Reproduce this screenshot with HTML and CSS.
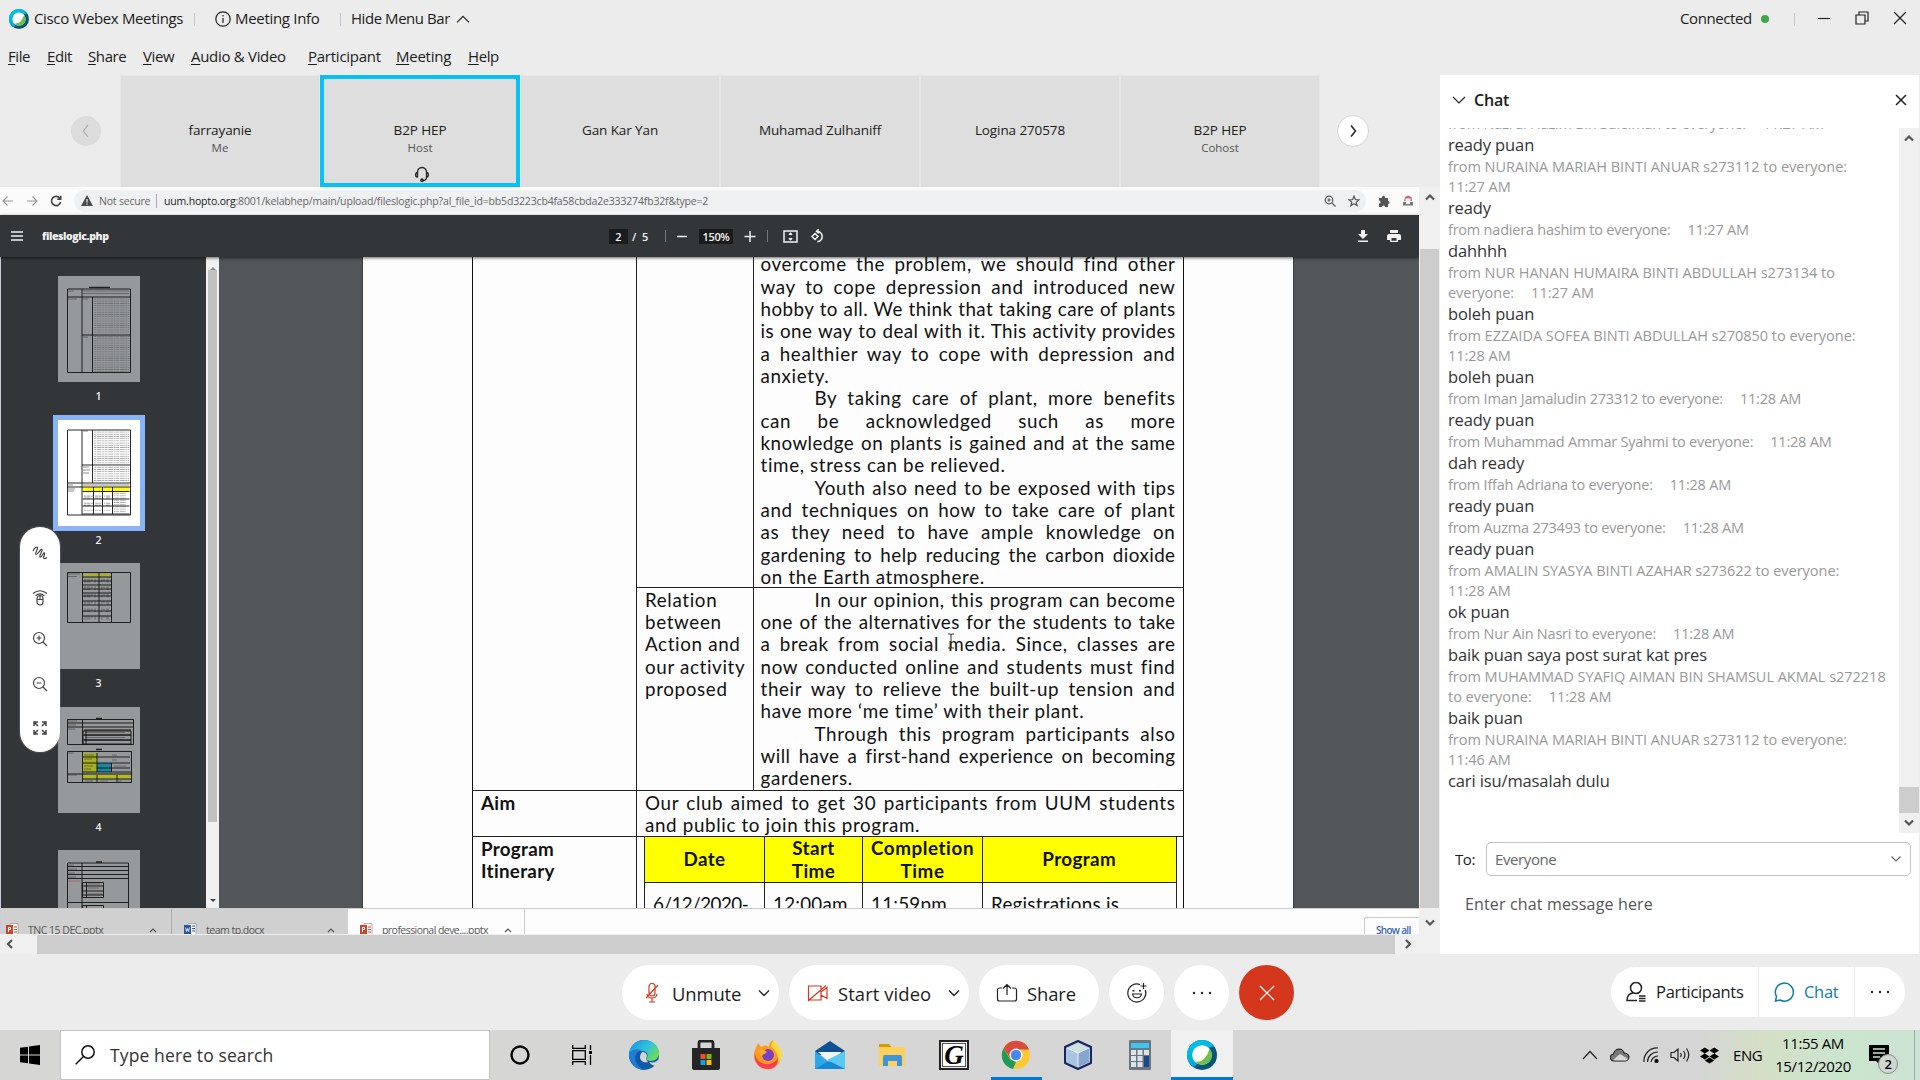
FILE: index.html
```html
<!DOCTYPE html>
<html lang="en">
<head>
<meta charset="utf-8">
<title>Cisco Webex Meetings</title>
<link rel="stylesheet" href="styles.css">
</head>
<body>
<div class="app">
  <header class="titlebar">
    <svg class="logo" viewBox="0 0 32 32"><use href="#webex"/></svg>
    <span class="t-app">Cisco Webex Meetings</span>
    <i class="sep"></i>
    <svg class="ic info" viewBox="0 0 16 16"><circle cx="8" cy="8" r="7.2"/><path d="M8 7v5M8 4v1.4"/></svg>
    <span class="t-info">Meeting Info</span>
    <i class="sep"></i>
    <span class="t-hide">Hide Menu Bar</span>
    <svg class="ic up" viewBox="0 0 14 8"><path d="M1 7.300l6-6 6 6"/></svg>
    <span class="t-conn">Connected</span><i class="dot"></i><i class="sep sep-win"></i>
    <svg class="ic win" viewBox="0 0 14 14"><path d="M1 7.500h12"/></svg>
    <svg class="ic win" viewBox="0 0 14 14"><path d="M1 4h9v9H1zM4 4V1h9v9h-3"/></svg>
    <svg class="ic win" viewBox="0 0 14 14"><path d="M1 1l12 12M13 1L1 13"/></svg>
  </header>
  <nav class="menu">
    <span class="m1"><u>F</u>ile</span><span class="m2"><u>E</u>dit</span><span class="m3"><u>S</u>hare</span><span class="m4"><u>V</u>iew</span><span class="m5"><u>A</u>udio &amp; Video</span><span class="m6"><u>P</u>articipant</span><span class="m7"><u>M</u>eeting</span><span class="m8"><u>H</u>elp</span>
  </nav>

  <div class="middle">
    <main class="stage">
      <div class="strip">
        <div class="side"><span class="round off"><svg class="ic" viewBox="0 0 8 14"><path d="M6 1L1.500 7 6 13"/></svg></span></div>
        <div class="tile"><b>farrayanie</b><small>Me</small></div>
        <div class="tile active"><b>B2P HEP</b><small>Host</small>
          <svg class="ic headset" viewBox="0 0 16 16"><path d="M3.500 11.500V6a4.500 4.500 0 0 1 9 0v5.500M3.500 6.500C1 6.500 1 11 3.500 11M12.500 6.500c2.500 0 2.500 4.500 0 4.500M12.500 11.500c0 2-1.500 3-4 3"/><circle cx="8" cy="14.200" r="1.200"/></svg></div>
        <div class="tile"><b>Gan Kar Yan</b><small></small></div>
        <div class="tile"><b>Muhamad Zulhaniff</b><small></small></div>
        <div class="tile"><b>Logina 270578</b><small></small></div>
        <div class="tile"><b>B2P HEP</b><small>Cohost</small></div>
        <div class="side"><span class="round"><svg class="ic" viewBox="0 0 8 14"><path d="M2 1.500L6.500 7 2 12.500"/></svg></span></div>
      </div>

      <div class="share">
        <div class="shared">
          <div class="address">
            <svg class="ac nav" viewBox="0 0 12 12"><path d="M11 6H1.500M5.500 1.500L1 6l4.500 4.500"/></svg>
            <svg class="ac nav" viewBox="0 0 12 12"><path d="M1 6h9.500M6.500 1.500L11 6l-4.500 4.500"/></svg>
            <svg class="ac reload" viewBox="0 0 12 12"><path d="M10 3.500A4.600 4.600 0 1 0 10.600 7M10.700.8V4.300H7.200"/></svg>
            <div class="pill">
              <svg class="warn" viewBox="0 0 12 11"><path d="M6 0l6 11H0z"/><path class="w" d="M6 4v3.500M6 8.500v1.300"/></svg>
              <span class="ns">Not secure</span><i></i>
              <span class="url"><em>uum.hopto.org</em>:8001/kelabhep/main/upload/fileslogic.php?al_file_id=bb5d3223cb4fa58cbda2e333274fb32f&amp;type=2</span>
              <svg class="ac zoomi" viewBox="0 0 12 12"><circle cx="5" cy="5" r="3.800"/><path d="M8 8l3.500 3.500M3.200 5h3.600M5 3.200v3.600"/></svg>
              <svg class="ac star" viewBox="0 0 12 12"><path d="M6 1.200l1.400 3.300 3.500.3-2.700 2.300.9 3.500L6 8.800l-3.100 1.800.9-3.500L1.100 4.800l3.500-.3z"/></svg>
            </div>
            <svg class="puzzle" viewBox="0 0 12 12"><path d="M1 3h3a1.600 1.600 0 1 1 3 0h3v3a1.500 1.500 0 1 1 0 3v3H7.200a1.600 1.600 0 0 0-3.200 0H1V8.500a1.500 1.500 0 0 0 0-3z"/></svg>
            <svg class="avatar" viewBox="0 0 12 12"><path fill="#c46a78" d="M3 2l3-1.500L9.500 2l.5 4H8.500V3.500h-5V6H2z"/><path fill="#777" d="M1 7h3v2h4V7h3v3.500H1z"/></svg>
          </div>

          <div class="pdfbar">
            <svg class="pi burger" viewBox="0 0 12 10"><path d="M0 1h12M0 5h12M0 9h12"/></svg>
            <b class="file">fileslogic.php</b>
            <span class="box pg">2</span><span class="of">/&nbsp; 5</span><i></i>
            <svg class="pi minus" viewBox="0 0 12 12"><path d="M1 6.500h10"/></svg>
            <span class="box pc">150%</span>
            <svg class="pi plus" viewBox="0 0 12 12"><path d="M.5 6.500h11M6 1v11"/></svg><i></i>
            <svg class="pi fit" viewBox="0 0 15 13"><path d="M1 1h13v11H1zM7.500 3.500v1.500M7.500 8v1.500M6 4.700l1.500-1.500L9 4.700M6 8.300l1.500 1.500L9 8.300"/></svg>
            <svg class="pi rot" viewBox="0 0 14 14"><path d="M5 4.500l3 3-3 3-3-3zM6.500 2.200a5.300 5.300 0 0 1 .8 10.600M8.800.2L6.500 2.300l2.300 2.200"/></svg>
            <svg class="ps down" viewBox="0 0 12 14"><path d="M4 1h4v4h3L6 10 1 5h3zM1 11.500h10V13H1z"/></svg>
            <svg class="ps print" viewBox="0 0 14 14"><path d="M3 1h8v3H3zM2 5h10a2 2 0 0 1 2 2v4h-3v2H3v-2H0V7a2 2 0 0 1 2-2zm2.500 4v2.800h5V9z"/></svg>
          </div>

          <div class="viewer">
            <aside class="thumbs">
              <figure><svg viewBox="0 0 82 106"><rect class="g" width="82" height="106"/><path class="k2" d="M31 11.500h21"/>
                <g class="tx"><path d="M25 15h46M25 17.500h46M10 15h6M10 23h9M25 23h5M25 61h5"/><rect x="36" y="22" width="35" height="35" fill="url(#lines)"/><rect x="36" y="60" width="35" height="36" fill="url(#lines)"/></g>
                <path class="k" d="M9.500 13h63v83.500h-63zM9.500 21h63M24 13v83.500M34.500 21v75.500M24 59h48"/></svg><figcaption>1</figcaption></figure>
              <figure class="cur"><svg viewBox="0 0 82 106"><rect fill="#fff" width="82" height="106"/>
                <g class="tx"><path d="M25 11h5M25 47h6M25 50h7M25 53h6M10 65h5M25 65h46M10 69h7M10 71h6"/><rect x="36" y="11" width="35" height="33" fill="url(#lines)"/><rect x="36" y="46" width="35" height="15" fill="url(#lines)"/><rect x="26" y="72" width="9" height="19" fill="url(#sparse)"/><rect x="37" y="72" width="6" height="19" fill="url(#sparse)"/><rect x="46" y="72" width="6" height="19" fill="url(#sparse)"/><rect x="56" y="71" width="12" height="22" fill="url(#lines)"/></g>
                <rect x="24.500" y="67" width="47" height="4.500" fill="#ff0"/><path class="k" d="M9.500 10h63v85h-63zM24 10v85M34.500 10v53M24 45h48M9.500 63h63M9.500 67h63M24.500 71.500h47M24.500 79h47M24.500 86h47M24.500 94h47M35.500 67v27M44.500 67v27M54.500 67v27"/></svg><figcaption>2</figcaption></figure>
              <figure><svg viewBox="0 0 82 106"><rect class="g" width="82" height="106"/>
                <g class="tx"><path d="M10 11h12M10 13.500h9"/><rect x="26" y="15" width="12" height="43" fill="url(#sparse)"/><rect x="43" y="15" width="8" height="43" fill="url(#sparse)"/></g>
                <rect x="24.500" y="11" width="29" height="2.500" fill="#aeb022"/><path class="k" d="M9.500 9.500h63v50h-63zM24.500 9.500v50M41 10v49M53.500 10v49M24.500 14h29M24.500 18h29M24.500 22h29M24.500 26h29M24.500 30h29M24.500 33h29M24.500 38h29M24.500 42h29M24.500 48h29M24.500 53h29"/></svg><figcaption>3</figcaption></figure>
              <figure><svg viewBox="0 0 82 106"><rect class="g" width="82" height="106"/><path class="k2" d="M38 11.500h6M38 42.500h6"/>
                <path fill="#555" d="M26 22h47v2H26zM26 27h47v2H26zM26 32h47v2H26z"/><rect x="25" y="46" width="14" height="19" fill="#a6b020"/><rect x="39" y="56" width="14.500" height="9" fill="#1b86a0"/><rect x="25" y="68" width="48" height="3.500" fill="#b3bb14"/>
                <g class="tx"><path d="M26 48h10M26 52h8M26 59h9M26 62h7M54 48h5M54 53h5M56 59h12M10 14h9M10 18h8M10 22h7M27 25.500h40M27 30.500h40M27 74h8M42 74h8M60 74h4M10 46h6M10 68h9"/></g>
                <path class="k" d="M9.500 12.500h66v25h-66zM9.500 16h66M9.500 20h66M24.500 12.500v25M25 24h48v13H25zM28 24v13M25 28h48M25 33h48M9.500 44.500h64V75.500h-64zM24.500 44.500v31M25 50h47M25 56h47M39 46v19M53.500 56v9M39 61h33M25 65h48M9.500 67h64M25 72h48M39 68v7.500M59 68v7.500"/></svg><figcaption>4</figcaption></figure>
              <figure><svg viewBox="0 0 82 106"><rect class="g" width="82" height="106"/><path class="k2" d="M38 12h6"/><g class="tx"><path d="M10 15h6M10 19h9M10 23h7M10 27h8M30 34h12M30 38h11M30 44h14"/></g><path stroke="#b4474d" stroke-width=".6" d="M10 31h12"/>
                <path class="k" d="M9.500 13h61v90h-61zM24 13v90M9.500 16.500h61M9.500 20.500h61M9.500 24.500h61M9.500 28.500h61M24.500 32.500h21v15h-21zM28.500 32.500v15M24.500 36h21M24.500 41h21M24.500 45h21M9.500 52.500h61M24.500 55.500h21v10h-21zM28.500 55.500v10"/></svg></figure>
            </aside>
            <div class="tsb"><i class="ua"></i><i class="th"></i><i class="da"></i></div>
            <div class="canvas">
              <div class="page">
                <div class="doc">
                  <div class="c1"></div>
                  <div class="c2"></div>
                  <div class="c3 r1">
                    <p>overcome the problem, we should find other</p><p>way to cope depression and introduced new</p><p class="tight">hobby to all. We think that taking care of plants</p><p class="tight">is one way to deal with it. This activity provides</p><p>a healthier way to cope with depression and</p><p class="n">anxiety.</p>
                    <p class="in">By taking care of plant, more benefits</p><p>can be acknowledged such as more</p><p class="tight">knowledge on plants is gained and at the same</p><p class="n">time, stress can be relieved.</p>
                    <p class="in">Youth also need to be exposed with tips</p><p>and techniques on how to take care of plant</p><p>as they need to have ample knowledge on</p><p class="tight">gardening to help reducing the carbon dioxide</p><p class="n">on the Earth atmosphere.</p>
                  </div>
                  <div class="c1"></div>
                  <div class="c2 line"><p class="n">Relation</p><p class="n">between</p><p class="n">Action and</p><p class="n">our activity</p><p class="n">proposed</p></div>
                  <div class="c3 r2 line">
                    <p class="in">In our opinion, this program can become</p><p class="tight">one of the alternatives for the students to take</p><p>a break from social media. Since, classes are</p><p>now conducted online and students must find</p><p>their way to relieve the built-up tension and</p><p class="n">have more ‘me time’ with their plant.</p>
                    <p class="in">Through this program participants also</p><p class="tight">will have a first-hand experience on becoming</p><p class="n">gardeners.</p>
                    <svg class="ibeam" viewBox="0 0 8 16"><path d="M1 1h2.500L4 2l.5-1H7M4 2v12M1 15h2.500l.5-1 .5 1H7"/></svg>
                  </div>
                  <div class="c1 line bold"><p class="n">Aim</p></div>
                  <div class="wide line r3"><p>Our club aimed to get 30 participants from UUM students</p><p class="n">and public to join this program.</p></div>
                  <div class="c1 line bold"><p class="n">Program</p><p class="n">Itinerary</p></div>
                  <div class="wide line r4">
                    <div class="sched">
                      <b>Date</b><b>Start<br>Time</b><b class="wd">Completion<br>Time</b><b>Program</b>
                      <span>6/12/2020-</span><span>12:00am</span><span>11:59pm</span><span>Registrations is</span>
                    </div>
                  </div>
                </div>
              </div>
            </div>
          </div>

          <div class="downloads">
            <div class="dl"><svg viewBox="0 0 13 13"><use href="#ppt"/></svg><span>TNC 15 DEC.pptx</span><svg class="ch" viewBox="0 0 8 5"><path d="M1 4l3-3 3 3"/></svg></div>
            <div class="dl"><svg viewBox="0 0 13 13"><use href="#doc"/></svg><span>team tp.docx</span><svg class="ch" viewBox="0 0 8 5"><path d="M1 4l3-3 3 3"/></svg></div>
            <div class="dl on"><svg viewBox="0 0 13 13"><use href="#ppt"/></svg><span>professional deve....pptx</span><svg class="ch" viewBox="0 0 8 5"><path d="M1 4l3-3 3 3"/></svg></div>
            <span class="showall">Show all</span>
          </div>
        </div>
        <div class="vsb"><svg class="sa" viewBox="0 0 10 8"><path d="M1 6.500l4-4 4 4"/></svg><i></i><svg class="sa" viewBox="0 0 10 8"><path d="M1 1.500l4 4 4-4"/></svg></div>
        <div class="hsb"><svg class="sa h" viewBox="0 0 8 10"><path d="M6 1L2 5l4 4"/></svg><i></i><svg class="sa h" viewBox="0 0 8 10"><path d="M2 1l4 4-4 4"/></svg></div>
        <div class="tools">
          <svg class="ic" viewBox="0 0 16 14"><path d="M1 5c1.500-3 4-5 4.500-3.500S2.500 8 4 8.500 9 2 10 3.500 6.500 10 8 11s3.500-5 4.500-4-2 5-.5 5.500 2-.5 3-1"/></svg>
          <svg class="ic" viewBox="0 0 16 16"><path d="M1 3.500Q8-2 15 3.500M3.500 5.800Q8 2 12.500 5.800M5 8.500a3 3 0 0 1 6 0V12a3 3 0 0 1-6 0zM5 9.500h6M8 6v3.500"/></svg>
          <svg class="ic zin" viewBox="0 0 16 16"><circle cx="7" cy="7" r="5.500"/><path d="M11 11l4 4M4.500 7h5M7 4.500v5"/></svg>
          <svg class="ic" viewBox="0 0 16 16"><circle cx="7" cy="7" r="5.500"/><path d="M11 11l4 4M4.500 7h5"/></svg>
          <svg class="ic fs" viewBox="0 0 16 16"><path d="M2 6V2h4M2 2l4 4M10 2h4v4M14 2l-4 4M2 10v4h4M2 14l4-4M14 10v4h-4M14 14l-4-4"/></svg>
        </div>
      </div>
    </main>

    <section class="chat">
      <div class="chead"><svg class="ic cv" viewBox="0 0 14 8"><path d="M1 1l6 6 6-6"/></svg><b>Chat</b><svg class="ic cx" viewBox="0 0 12 12"><path d="M1 1l10 10M11 1L1 11"/></svg></div>
      <div class="cbody">
        <div class="msgs">
          <div class="f">from Nazrul Hazim Bin Suleiman to everyone:<s></s>11:27 AM</div><div class="t">ready puan</div>
          <div class="f caps">from NURAINA MARIAH BINTI ANUAR s273112 to everyone:<br>11:27 AM</div><div class="t">ready</div>
          <div class="f">from nadiera hashim to everyone:<s></s>11:27 AM</div><div class="t">dahhhh</div>
          <div class="f caps">from NUR HANAN HUMAIRA BINTI ABDULLAH s273134 to<br>everyone:<s></s>11:27 AM</div><div class="t">boleh puan</div>
          <div class="f caps">from EZZAIDA SOFEA BINTI ABDULLAH s270850 to everyone:<br>11:28 AM</div><div class="t">boleh puan</div>
          <div class="f">from Iman Jamaludin 273312 to everyone:<s></s>11:28 AM</div><div class="t">ready puan</div>
          <div class="f">from Muhammad Ammar Syahmi to everyone:<s></s>11:28 AM</div><div class="t">dah ready</div>
          <div class="f">from Iffah Adriana to everyone:<s></s>11:28 AM</div><div class="t">ready puan</div>
          <div class="f">from Auzma 273493 to everyone:<s></s>11:28 AM</div><div class="t">ready puan</div>
          <div class="f caps">from AMALIN SYASYA BINTI AZAHAR s273622 to everyone:<br>11:28 AM</div><div class="t">ok puan</div>
          <div class="f">from Nur Ain Nasri to everyone:<s></s>11:28 AM</div><div class="t">baik puan saya post surat kat pres</div>
          <div class="f caps">from MUHAMMAD SYAFIQ AIMAN BIN SHAMSUL AKMAL s272218<br>to everyone:<s></s>11:28 AM</div><div class="t">baik puan</div>
          <div class="f caps">from NURAINA MARIAH BINTI ANUAR s273112 to everyone:<br>11:46 AM</div><div class="t">cari isu/masalah dulu</div>
        </div>
        <div class="csb"><svg class="sa" viewBox="0 0 10 8"><path d="M1 6.500l4-4 4 4"/></svg><i></i><svg class="sa" viewBox="0 0 10 8"><path d="M1 1.500l4 4 4-4"/></svg></div>
      </div>
      <div class="to"><span>To:</span><div class="sel">Everyone<svg class="ic" viewBox="0 0 12 8"><path d="M1.500 1.500L6 6l4.500-4.500"/></svg></div></div>
      <div class="entry">Enter chat message here</div>
    </section>
  </div>

  <footer class="controls">
    <div class="btn b1"><svg class="ic red" viewBox="0 0 18 20"><path d="M6 3.500a3 3 0 0 1 6 0V10a3 3 0 0 1-6 0zM4 11c.5 3 2.500 4 5 4s4.500-1 5-4M9 15v4M6 19h6M15 2L3 15"/></svg><span>Unmute</span><svg class="ic cd" viewBox="0 0 12 8"><path d="M1 1.500L6 6.500l5-5"/></svg></div>
    <div class="btn b2"><svg class="ic red" viewBox="0 0 22 20"><path d="M1.500 3h12.500v14H1.500zM14 9l6-4.500v11L14 12M19 2.500L1 18"/></svg><span>Start video</span><svg class="ic cd" viewBox="0 0 12 8"><path d="M1 1.500L6 6.500l5-5"/></svg></div>
    <div class="btn b3"><svg class="ic" viewBox="0 0 22 20"><path d="M6 5H3.500A2 2 0 0 0 1.500 7v9a2 2 0 0 0 2 2h15a2 2 0 0 0 2-2V7a2 2 0 0 0-2-2H16M11 12V1.500M7 5.500l4-4 4 4"/></svg><span>Share</span></div>
    <div class="btn c"><svg class="ic" viewBox="0 0 22 22"><path d="M14 2.600A9 9 0 1 0 19.300 8M17.500 1v6M14.500 4h6M6.500 12c1 5 8 5 9 0z"/><path d="M7.500 8v1.500M14 8v1.500" stroke-width="2"/></svg></div>
    <div class="btn c"><svg class="dots" viewBox="0 0 20 4"><circle cx="2" cy="2" r="1.200"/><circle cx="10" cy="2" r="1.200"/><circle cx="18" cy="2" r="1.200"/></svg></div>
    <div class="btn c end"><svg class="ic" viewBox="0 0 16 16"><path d="M1 1l14 14M15 1L1 15"/></svg></div>
    <div class="panel">
      <div class="p1"><svg class="ic" viewBox="0 0 20 20"><path d="M7 11C3 11.500 1 14 1 18.500h10M12.500 11l-1 1"/><ellipse cx="10" cy="6" rx="5.500" ry="5.500"/><path d="M13 14h6.500M13 16.500h6.500M13 19h6.500"/></svg><span>Participants</span></div>
      <div class="p2"><svg class="ic" viewBox="0 0 20 20"><path d="M1.500 19l1-4.500A9 9 0 1 1 6 18z"/></svg><span>Chat</span></div>
      <div class="p3"><svg class="dots" viewBox="0 0 20 4"><circle cx="2" cy="2" r="1.200"/><circle cx="10" cy="2" r="1.200"/><circle cx="18" cy="2" r="1.200"/></svg></div>
    </div>
  </footer>

  <div class="taskbar">
    <div class="start"><svg viewBox="0 0 20 20"><path d="M0 2.800l8-1.100v7.800H0zM9 1.500L20 0v9.500H9zM0 10.500h8v7.800l-8-1.100zM9 10.500h11V20L9 18.500z"/></svg></div>
    <div class="search"><svg class="ic" viewBox="0 0 20 20"><circle cx="13" cy="7" r="6.200"/><path d="M8.500 11.500L.7 19.300"/></svg><span>Type here to search</span></div>
    <div class="slot s1"><svg viewBox="0 0 20 20"><circle cx="10" cy="10" r="8.500" fill="none" stroke="#000" stroke-width="2.400"/></svg></div>
    <div class="slot s2"><svg viewBox="0 0 20 20" fill="none" stroke="#000" stroke-width="1.300"><path d="M.7 0v3.300h12.600V0M.7 5.700h12.600v8.600H.7zM.7 20v-3.300h12.600V20M18.500 0v5M18.500 10v10"/><path d="M17 6h3v3h-3z" fill="#000" stroke="none"/></svg></div>
    <div class="slot"><svg class="big" viewBox="0 0 30 30"><defs><linearGradient id="e1" x2="1" y2=".6"><stop stop-color="#1a8fd8"/><stop offset=".6" stop-color="#2fc2df"/><stop offset="1" stop-color="#6ddc5a"/></linearGradient></defs><circle cx="15" cy="15" r="15" fill="#0f59a6"/><path fill="url(#e1)" d="M0 14C1 5 8 0 15 0c9 0 15 6 15 13 0 5-4 8-8 8-3 0-5-1-4-3 2-4-1-7-5-7C7 9 2 11 0 14z"/><path fill="#1b7fd3" d="M0 14c2-4 7-6 12-4-5 2-7 7-5 12 2 4 5 7 9 8C7 30 0 23 0 14z"/><path fill="#d5d5d5" d="M13 12c3 0 5 2 5 4-1 2-1 4 1 6-4 1-8-1-8-5 0-2 1-4 2-5zM20 22c4 1 7 0 9-2l3 0v6l-4 0c-2 0-6-1-8-4z"/></svg></div>
    <div class="slot"><svg class="big" viewBox="0 0 30 30"><path d="M8 9V3q0-2 2-2h10q2 0 2 2v6" fill="none" stroke="#222" stroke-width="2.800"/><path fill="#252525" d="M1 8h28v20q0 2-2 2H3q-2 0-2-2z"/><path fill="#f25022" d="M9.500 14h5v5h-5z"/><path fill="#7fba00" d="M15.500 14h5v5h-5z"/><path fill="#00a4ef" d="M9.500 20h5v5h-5z"/><path fill="#ffb900" d="M15.500 20h5v5h-5z"/></svg></div>
    <div class="slot"><svg class="big" viewBox="0 0 30 30"><path fill="#ff9a1f" d="M2 10l3-7 3 4c3-2 6-2 8 0 0-4 2-6 4-7 1 4 8 7 8 16a13.500 13.500 0 0 1-27 0c0-2 0-4 1-6z"/><path fill="#ffd93b" d="M18 7c0-4 2-6 3-7 1 4 8 7 8 15-1 5-3 7-4 8 1-7-2-13-7-16z"/><path fill="#fa3a5b" d="M2 12c0 5 3 11 10 12s12-3 13-7c1 8-5 12-10 12C7 29 0 22 2 12z"/><circle cx="15" cy="15" r="6" fill="#7b3fc8"/><path fill="#ffae2a" d="M6 10c3-1 6 0 8 2-2 2-4 2-5 4-2-2-3-3-3-6z"/></svg></div>
    <div class="slot"><svg class="big" viewBox="0 0 30 30"><path fill="#0f4f94" d="M0 11L15 1l15 10v4H0z"/><path fill="#f4f4f4" d="M3 12h24L15 22z"/><path fill="#2aa8e8" d="M0 11l15 12L30 11v18H0z"/><path fill="#5cc9f5" d="M30 11v18L12 20z"/><path fill="#1787d6" d="M0 29l14-8 16 8z"/></svg></div>
    <div class="slot"><svg class="big" viewBox="0 0 30 30"><path fill="#d89a00" d="M2 4h10l3 4H2z"/><path fill="#fdd15a" d="M2 7h25q1 0 1 1v18H2z"/><path fill="#3b96dd" d="M6 26V17q0-2 2-2h15q2 0 2 2v9h-5v-5h-9v5z"/></svg></div>
    <div class="slot"><span class="gapp">G</span></div>
    <div class="slot run"><svg class="big" viewBox="0 0 30 30"><circle cx="15" cy="15" r="14" fill="#fcc934"/><path fill="#d94a3f" d="M2.500 8.500A14 14 0 0 1 28 9.500H15L9 18z"/><path fill="#1e9b57" d="M2.500 8.500L9 19l6 3-3 7A14 14 0 0 1 2.500 8.500z"/><circle cx="15" cy="15" r="6.500" fill="#fff"/><circle cx="15" cy="15" r="5.200" fill="#4688f1"/></svg></div>
    <div class="slot"><svg class="big" viewBox="0 0 30 30"><path fill="#a9c4e0" stroke="#1c2360" stroke-width="2" stroke-linejoin="round" d="M15 1l13 6v16l-13 6-13-6V7z"/><path fill="#cfe3dc" d="M15 3l10 5-10 5L5 8z"/><path fill="#86a6d0" d="M15 13l11-5v14l-11 5z"/><path d="M4 8l11 5 11-5M15 13v14" stroke="#e8f2fb" fill="none"/></svg></div>
    <div class="slot"><svg class="big" viewBox="0 0 30 30"><rect x="4" width="22" height="30" rx="1" fill="#6b7780"/><path fill="#3dc5f0" d="M6 3h18v5H6z"/><path fill="#dde3e8" d="M6 10h5v5H6zM12.500 10h5v5h-5zM19 10h5v5h-5zM6 16h5v5H6zM12.500 16h5v5h-5zM6 22h5v5H6zM12.500 22h5v5h-5z"/><path fill="#174a86" d="M19 16h5v11h-5z"/></svg></div>
    <div class="slot run cur"><svg class="big" viewBox="0 0 32 32"><use href="#webex"/></svg></div>
    <div class="tray">
      <svg class="ic k1" viewBox="0 0 16 10"><path d="M1 9l7-7.500L15 9"/></svg>
      <svg class="k2i" viewBox="0 0 20 14"><path fill="#777" stroke="#111" d="M4 13a3.500 3.500 0 0 1-.5-7C4 3 6 1 9 1s4.500 1.500 5 4c3 0 5 1.500 5 4s-2 4-4 4z"/><path fill="#d9d9d9" d="M3 12l7-6 8 5-2 1.500H5z"/></svg>
      <svg class="ic k3" viewBox="0 0 16 16"><path d="M1 15A13 13 0 0 1 15 1M4.500 15A10 10 0 0 1 15 5M8 15a7 7 0 0 1 7-6"/><circle cx="13.500" cy="14" r="1.600" fill="#000"/></svg>
      <svg class="ic k4" viewBox="0 0 20 16"><path d="M1 5.500h3L8 2v12l-4-3.500H1zM10.500 6q1.500 2 0 4M13.500 4q3 4 0 8M16.500 1.500q4.500 6.500 0 13"/></svg>
      <svg class="k5" viewBox="0 0 20 17"><path d="M5 0l5 3.200L5 6.400 0 3.200zM15 0l5 3.200-5 3.200-5-3.200zM5 6.400l5 3.200-5 3.200L0 9.600zM15 6.400l5 3.200-5 3.200-5-3.200zM5 13.800l5-3.200 5 3.200L10 17z"/></svg>
      <span class="eng">ENG</span>
      <span class="clock">11:55 AM<br>15/12/2020</span>
      <span class="note"><svg viewBox="0 0 20 20"><path d="M0 0h20v16h-9v4l-4-4H0z"/><path d="M4 4h12M4 8h12M4 12h7" stroke="#cfe3cc" stroke-width="1.300"/></svg><i>2</i></span>
      <i class="peek"></i>
    </div>
  </div>
</div>

<svg class="defs" width="0" height="0">
  <defs>
    <linearGradient id="wg" x2=".4" y2="1"><stop stop-color="#00c8f0"/><stop offset="1" stop-color="#04a5d6"/></linearGradient>
    <pattern id="lines" width="35" height="2.200" patternUnits="userSpaceOnUse"><path d="M0 1h35" stroke="#444" stroke-width=".6" stroke-dasharray="3 .6 5 .5 2 .5"/></pattern>
    <pattern id="sparse" width="12" height="7.400" patternUnits="userSpaceOnUse"><path d="M0 2h11M0 4h9" stroke="#333" stroke-width=".7" stroke-dasharray="4 .5"/></pattern>
    <symbol id="webex" viewBox="0 0 32 32"><circle cx="16" cy="16" r="16" fill="#06567c"/><path fill="url(#wg)" d="M16 0C7 0 0 7 0 16c0 5 2 9 5 12 2 1 5 0 5-2 2-4 5-9 10-15 3-3 6-4 9-4-3-4-8-7-13-7z"/><circle cx="16" cy="16" r="10.500" fill="#fff"/><path fill="#6fc04a" d="M24 9c4 5 3 12-1 15-5 4-11 3-14-1 8 1 13-6 15-14z"/></symbol>
    <symbol id="ppt" viewBox="0 0 13 13"><path fill="#fff" stroke="#a99" stroke-width=".8" d="M4 .5h8v12H4z"/><path fill="#c8442a" d="M0 2h7v9H0z"/><path d="M2.500 9V4.500h2v2h-2" stroke="#fff" fill="none"/><path stroke="#c8442a" d="M8 4h3M8 6.500h3M8 9h3"/></symbol>
    <symbol id="doc" viewBox="0 0 13 13"><path fill="#fff" stroke="#89a" stroke-width=".8" d="M4 .5h8v12H4z"/><path fill="#2b579a" d="M0 2h7v9H0z"/><path d="M1.500 4.500l1 4 1-3 1 3 1-4" stroke="#fff" fill="none" stroke-width=".8"/><path stroke="#2b579a" d="M8 3h3M8 5.500h3M8 8h3"/></symbol>
  </defs>
</svg>
</body>
</html>
```
FILE: styles.css
```css
* { box-sizing: border-box; }
body { margin: 0; width: 1920px; height: 1080px; overflow: hidden; background: #ececec; color: #1c1c1c; font-family: "Open Sans", "Noto Sans", sans-serif; }
svg { display: block; flex: none; }
.defs { position: absolute; }
.ic { fill: none; stroke: #222; stroke-width: 1.2; }
span, b { white-space: nowrap; }
.app { display: flex; flex-direction: column; height: 1080px; }

/* title bar and menu */
.titlebar { height: 38px; display: flex; align-items: center; padding-left: 9px; font-size: 15px; }
.titlebar span { line-height: 20px; padding-bottom: 2px; }
.logo { width: 20px; height: 20px; margin-right: 5px; }
.t-app { width: 150px; letter-spacing: -.35px; }
.sep { width: 1px; height: 13px; background: #c8c8c8; margin: 0 20px 0 10px; }
.info { width: 16px; height: 16px; margin-right: 4px; }
.t-info { width: 95px; letter-spacing: -.3px; }
.t-info + .sep { margin: 0 10px; }
.t-hide { width: 105px; letter-spacing: -.45px; }
.up { width: 14px; height: 8px; }
.t-conn { margin-left: auto; width: 81px; letter-spacing: -.4px; }
.dot { width: 8px; height: 8px; border-radius: 50%; background: #3fa648; }
.sep-win { margin: 0 22px 0 25px; }
.win { width: 14px; height: 14px; margin: -3px 24px 0 0; }
.win:last-child { margin-right: 13px; }
.menu { height: 37px; display: flex; align-items: center; padding: 0 0 2px 8px; font-size: 15px; letter-spacing: -.4px; }
.menu span { line-height: 20px; }
.menu u { text-underline-offset: 2px; }
.m1 { width: 39px; } .m2 { width: 41px; } .m3 { width: 55px; } .m4 { width: 48px; } .m5 { width: 117px; letter-spacing: -.3px; } .m6 { width: 88px; letter-spacing: -.25px; } .m7 { width: 72px; letter-spacing: -.25px; }

/* participants strip */
.middle { height: 879px; display: flex; }
.stage { width: 1440px; }
.strip { height: 112px; display: flex; }
.side { width: 120px; display: flex; align-items: center; justify-content: flex-end; padding-right: 19px; }
.side:last-child { justify-content: flex-start; padding: 0 0 0 17px; }
.round { width: 32px; height: 32px; border-radius: 50%; background: #fff; border: 1px solid #d5d5d5; display: flex; align-items: center; justify-content: center; }
.round svg { width: 8px; height: 14px; stroke-width: 1.5; }
.round.off { width: 30px; height: 30px; background: #dcdcdc; border: 0; }
.round.off svg { stroke: #aaa; stroke-width: 1.2; }
.tile { width: 200px; background: #dedede; border: 1px solid #e7e7e7; border-bottom: 0; display: flex; flex-direction: column; align-items: center; padding-top: 44px; }
.tile b { font-weight: 400; font-size: 13.500px; line-height: 20px; letter-spacing: -.1px; }
.tile small { font-size: 11.500px; line-height: 16px; color: #555; }
.tile.active { border: 4px solid #05c1f5; padding-top: 41px; }
.headset { width: 16px; height: 16px; margin: 10px 0 0 4px; stroke-width: 1.3; }

/* shared browser */
.share { position: relative; height: 767px; display: grid; grid-template: 747px 20px / 1420px 20px; background: #f0f0f0; }
.shared { width: 1419px; background: #fff; overflow: hidden; }
.address { height: 28px; display: flex; align-items: center; padding-left: 2px; color: #666; font-size: 10.500px; background: #fbfbfc; }
.ac { width: 12px; height: 12px; fill: none; stroke: #555; stroke-width: 1.2; }
.ac.nav { stroke: #999; margin-right: 12px; }
.ac.reload { stroke: #444; stroke-width: 1.6; margin-right: 12px; }
.pill { width: 1292px; height: 22px; border-radius: 11px; background: #eef0f2; display: flex; align-items: center; padding-left: 7px; margin-top: -1px; }
.warn { width: 12px; height: 11px; fill: #4a4a4a; margin-right: 6px; }
.warn .w { stroke: #eee; stroke-width: 1.2; }
.ns { width: 57px; letter-spacing: -.2px; }
.pill i { width: 1px; height: 14px; background: #aaa; margin-right: 7px; }
.url { width: 1160px; letter-spacing: -.17px; }
.url em { font-style: normal; color: #222; }
.star { margin-left: 12px; }
.puzzle { width: 12px; height: 12px; margin-left: 12px; fill: #555; }
.avatar { width: 12px; height: 12px; margin-left: 12px; }
.pdfbar { position: relative; z-index: 1; height: 42px; background: #323639; display: flex; align-items: center; padding-left: 11px; color: #f1f1f1; font-size: 11px; font-weight: 600; box-shadow: 0 1px 3px rgba(0,0,0,.6); }
.pi { fill: none; stroke: #f1f1f1; stroke-width: 1.5; }
.ps { fill: #f1f1f1; }
.burger { width: 12px; height: 10px; margin-right: 19px; }
.file { width: 567px; font-size: 10.500px; letter-spacing: -.4px; }
.box { background: #191b1d; height: 15px; line-height: 15px; text-align: center; }
.pg { width: 19px; }
.of { width: 37px; padding-left: 4px; }
.pdfbar i { width: 1px; height: 12px; background: #777; }
.minus { width: 12px; height: 12px; margin: 0 11px 0 10px; }
.pc { width: 34px; letter-spacing: -.4px; }
.plus { width: 12px; height: 12px; margin: 0 11px 0 11px; }
.fit { width: 15px; height: 13px; margin: 0 12px 0 15px; }
.rot { width: 14px; height: 14px; margin-right: 533px; }
.down { width: 12px; height: 14px; margin-right: 18px; }
.print { width: 14px; height: 14px; }

.viewer { height: 651px; display: flex; background: #525659; border-left: 1px solid #ccd; }
.thumbs { width: 205px; overflow: hidden; background: #323639; padding: 19px 0 0 57px; color: #f1f1f1; }
figure { margin: 0; width: 82px; }
figure svg { width: 82px; height: 106px; }
figcaption { height: 37.500px; padding-top: 6px; font-size: 10.500px; font-weight: 600; line-height: 16px; text-align: center; padding-right: 1px; }
.cur svg { outline: 5px solid #8ab4f8; }
.g { fill: #96999b; }
.k { fill: none; stroke: #111; stroke-width: .9; }
.k2 { stroke: #222; stroke-width: 1.5; }
.tx { stroke: #444; stroke-width: .8; opacity: .75; }
.tx rect { stroke: none; }
.tsb { width: 13px; background: #f1f1f1; display: flex; flex-direction: column; align-items: center; }
.tsb .ua { height: 13px; border: 3px solid transparent; border-bottom: 3px solid #888; border-top-width: 7px; }
.tsb .th { width: 9px; height: 552px; background: #c1c1c1; }
.tsb .da { margin-top: auto; height: 9px; border: 3px solid transparent; border-top: 3px solid #444; }
.canvas { flex: 1; padding-left: 144px; overflow: hidden; }
.page { display: flex; align-items: flex-start; width: 930px; height: 651px; overflow: hidden; background: #fdfdfe; padding-left: 109px; outline: 1px solid #3c3f42; }

/* document table */
.doc { flex: none; width: 711.500px; margin-top: -4.500px; display: grid; grid-template-columns: 164px 116.500px 431px; grid-template-rows: 334.500px 203px 46px 80px; color: #111; font-family: Lato, "Open Sans", sans-serif; font-size: 18.800px; border-right: 1.500px solid #111; }
.doc p { position: relative; top: .7px; margin: 0; height: 22.350px; line-height: 22.350px; text-align-last: justify; white-space: nowrap; letter-spacing: .65px; }
.doc .tight { letter-spacing: .45px; }
.doc .n { text-align-last: left; letter-spacing: .65px; }
.doc .in { padding-left: 54px; }
.c1 { border-left: 1.500px solid #111; padding-left: 8px; }
.c2 { border-left: 1px solid #222; padding-left: 8px; }
.c3 { border-left: 1px solid #222; padding: 0 8px 0 7px; }
.line { border-top: 1px solid #222; }
.r2 { position: relative; }
.ibeam { position: absolute; left: 193px; top: 45px; width: 8px; height: 16px; fill: none; stroke: #333; }
.wide { grid-column: 2 / 4; border-left: 1px solid #222; padding: 0 8px 0 8px; }
.doc .r3 p { height: 22.800px; line-height: 22.800px; }
.bold { font-weight: 700; }
.doc .bold p { letter-spacing: .3px; }
.r4 { padding-left: 7px; padding-right: 7px; }
.sched { display: grid; grid-template-columns: 120px 98px 120px 1fr; grid-template-rows: 46px 60px; border-left: 1px solid #222; }
.sched b { display: flex; align-items: center; justify-content: center; text-align: center; line-height: 22.500px; letter-spacing: .4px; background: #ff0; border: solid #222; border-width: 0 1px 1px 0; }
.sched .wd { letter-spacing: .6px; }
.sched span { padding: 10px 0 0 8px; border-right: 1px solid #222; line-height: 22px; letter-spacing: .25px; }
.sched span:nth-child(5) { letter-spacing: -.5px; }

.downloads { height: 26px; overflow: hidden; display: flex; background: #fdfdfd; border-top: 1px solid #ccc; border-left: 1px solid #ccd; }
.dl { height: 40px; display: flex; align-items: flex-start; padding: 14px 0 0 5px; width: 170px; background: #d0d0d0; font-size: 10.500px; letter-spacing: -.5px; color: #555; }
.dl:nth-child(2) { width: 177px; padding-left: 12px; border-left: 1px solid #aaa; }
.dl.on { width: 177px; background: #fdfdfd; padding-left: 12px; border-right: 1px solid #ccc; letter-spacing: -.55px; }
.dl > svg:first-child { width: 13px; height: 13px; margin-right: 9px; }
.dl span { line-height: 14px; width: 121px; }
.dl .ch { width: 8px; height: 5px; margin-top: 5px; fill: none; stroke: #555; stroke-width: 1.2; }
.dl:nth-child(2) span { width: 121px; }
.dl.on span { width: 122px; }
.showall { margin-left: auto; margin-top: 8px; width: 55px; height: 40px; border: 1px solid #ccc; border-right: 0; border-radius: 3px 0 0 0; font-size: 10px; line-height: 24px; letter-spacing: -.7px; font-weight: 600; color: #3b64b0; padding-left: 11px; }

.sa { width: 10px; height: 8px; fill: none; stroke: #555; stroke-width: 2.200; }
.sa.h { width: 8px; height: 10px; }
.vsb { display: flex; flex-direction: column; align-items: center; padding: 6px 1px 0 0; }
.vsb i { width: 19px; height: 659px; margin: 48px 0 11px; background: #cdcdcd; }
.hsb { display: flex; align-items: center; padding-left: 6px; }
.hsb i { width: 1358px; height: 19px; margin: 0 9px 0 23px; background: #cdcdcd; }
.tools { position: absolute; left: 20px; top: 340px; width: 40px; height: 225px; border-radius: 20px; background: #fff; display: flex; flex-direction: column; align-items: center; padding-top: 18px; box-shadow: 0 0 2px #888; }
.tools svg { width: 16px; height: 16px; stroke: #444; margin-bottom: 28.500px; }
.tools .zin { margin-top: -3px; }
.tools .fs { stroke-width: 1.500; }

/* chat */
.chat { width: 479px; background: #fff; display: flex; flex-direction: column; }
.chead { height: 53px; display: flex; align-items: center; padding: 0 12px 3px 12px; }
.chead b { font-size: 16px; font-weight: 600; letter-spacing: -.2px; margin-left: -1px; }
.cv { width: 14px; height: 8px; margin-right: 9px; }
.cx { width: 12px; height: 12px; margin-left: auto; stroke-width: 1.500; }
.cbody { height: 705px; display: flex; overflow: hidden; }
.msgs { width: 459px; padding-left: 8px; margin-top: -14px; white-space: nowrap; }
.f { font-size: 14.500px; line-height: 20px; color: #999; letter-spacing: -.22px; }
.f.caps { letter-spacing: -.02px; }
.f s { display: inline-block; width: 17px; }
.t { font-size: 16.500px; line-height: 22px; padding-bottom: 1px; color: #333; letter-spacing: -.12px; }
.csb { width: 20px; background: #f0f0f0; display: flex; flex-direction: column; align-items: center; padding-top: 6px; }
.csb i { width: 20px; height: 26px; margin: 645px 0 6px; background: #cdcdcd; }
.to { height: 51px; display: flex; align-items: center; padding: 0 8px 0 15px; font-size: 15px; letter-spacing: -.4px; }
.to span { width: 31px; }
.sel { flex: 1; height: 34px; border: 1px solid #c4c4c4; border-radius: 5px; display: flex; align-items: center; justify-content: space-between; padding: 0 8px; color: #666; }
.sel svg { width: 12px; height: 8px; stroke: #666; }
.entry { padding: 9px 0 0 25px; font-size: 16px; line-height: 22px; color: #555; letter-spacing: .15px; }

/* meeting controls */
.controls { height: 76px; display: flex; padding: 11px 15px 0 622px; font-size: 18.400px; }
.btn { height: 55px; border-radius: 28px; background: #fff; display: flex; align-items: center; margin-right: 10px; }
.btn span { line-height: 24px; padding-top: 3px; letter-spacing: -.1px; }
.red { stroke: #d4371c; }
.cd { width: 12px; height: 8px; stroke-width: 1.4; }
.b1 { width: 157px; padding-left: 21px; } .b1 .red { width: 18px; height: 20px; margin-right: 11px; } .b1 span { width: 86px; }
.b2 { width: 180px; padding-left: 18px; } .b2 .red { width: 22px; height: 20px; margin-right: 9px; } .b2 span { width: 110px; letter-spacing: .1px; }
.b3 { width: 120px; padding-left: 17px; } .b3 .ic { width: 22px; height: 20px; margin-right: 9px; }
.c { width: 55px; justify-content: center; }
.c .ic { width: 22px; height: 22px; }
.dots { width: 20px; height: 4px; fill: #222; }
.end { background: #d4371c; margin: 0; }
.c.end .ic { width: 16px; height: 16px; stroke: #fff; }
.panel { margin: 2px 0 0 auto; width: 294px; height: 50px; border-radius: 25px; background: #fff; display: flex; font-size: 16.500px; letter-spacing: -.3px; }
.panel div { display: flex; align-items: center; }
.panel span { margin-top: -2px; }
.panel .ic { width: 20px; height: 20px; margin-right: 10px; stroke-width: 1.500; }
.p1 { width: 147px; padding-left: 15px; }
.p2 { width: 97px; padding-left: 15px; border: solid #ececec; border-width: 0 1px; color: #0a7ea8; }
.panel .p2 .ic { stroke: #0a7ea8; }
.p3 { padding-left: 15px; }

/* task bar */
.taskbar { height: 50px; display: flex; background: linear-gradient(90deg, #d6d6d5 0, #d5d5d5 1700px, #d4dfc6 1760px, #cbe5cc 1830px, #cce3d2 1920px); }
.start { width: 60px; padding: 15px 0 0 20px; }
.start svg { width: 20px; height: 20px; }
.search { width: 430px; height: 50px; background: #fff; border: 1px solid #c4c4c4; display: flex; align-items: center; padding-left: 14px; font-size: 17.500px; letter-spacing: .12px; color: #333; }
.search svg { width: 20px; height: 20px; margin-right: 15px; stroke: #111; stroke-width: 1.500; }
.slot { width: 62px; height: 50px; display: flex; align-items: center; justify-content: center; }
.slot svg { width: 20px; height: 20px; }
.slot .big { width: 30px; height: 30px; }
.s1 { width: 60px; }
.s2 { width: 63px; }
.gapp { width: 30px; height: 30px; border: 2px solid #222; box-shadow: inset 0 0 0 1px #eee, inset 0 0 0 2px #555; background: #fff; font: italic 700 27px/26px "Liberation Serif", serif; text-align: center; color: #000; }
.run { background: linear-gradient(#0078d7, #0078d7) center bottom / 51px 3px no-repeat; }
.run.cur { background: linear-gradient(#0078d7, #0078d7) center bottom / 62px 3px no-repeat, #f0f0f0; }
.run.cur svg { outline: 0; }
.tray { margin-left: auto; display: flex; align-items: center; font-size: 15px; color: #000; letter-spacing: -.4px; }
.k1 { width: 16px; height: 10px; margin-right: 12px; }
.k2i { width: 20px; height: 14px; margin-right: 13px; }
.k3 { width: 16px; height: 16px; margin-right: 11px; }
.k4 { width: 20px; height: 16px; margin-right: 10px; }
.k5 { width: 19px; height: 17px; margin-right: 14px; }
.eng { width: 29px; }
.clock { width: 102px; text-align: center; line-height: 23px; margin-right: 5px; }
.note { position: relative; width: 45px; height: 20px; }
.note svg { width: 20px; height: 20px; }
.note i { position: absolute; left: 9px; top: 9px; width: 20px; height: 20px; border: 1px solid #888; border-radius: 50%; background: #cfd8d0; font: 600 13px/18px "Open Sans", sans-serif; text-align: center; }
.peek { width: 6px; height: 50px; border-left: 1px solid #9aa; }
```
